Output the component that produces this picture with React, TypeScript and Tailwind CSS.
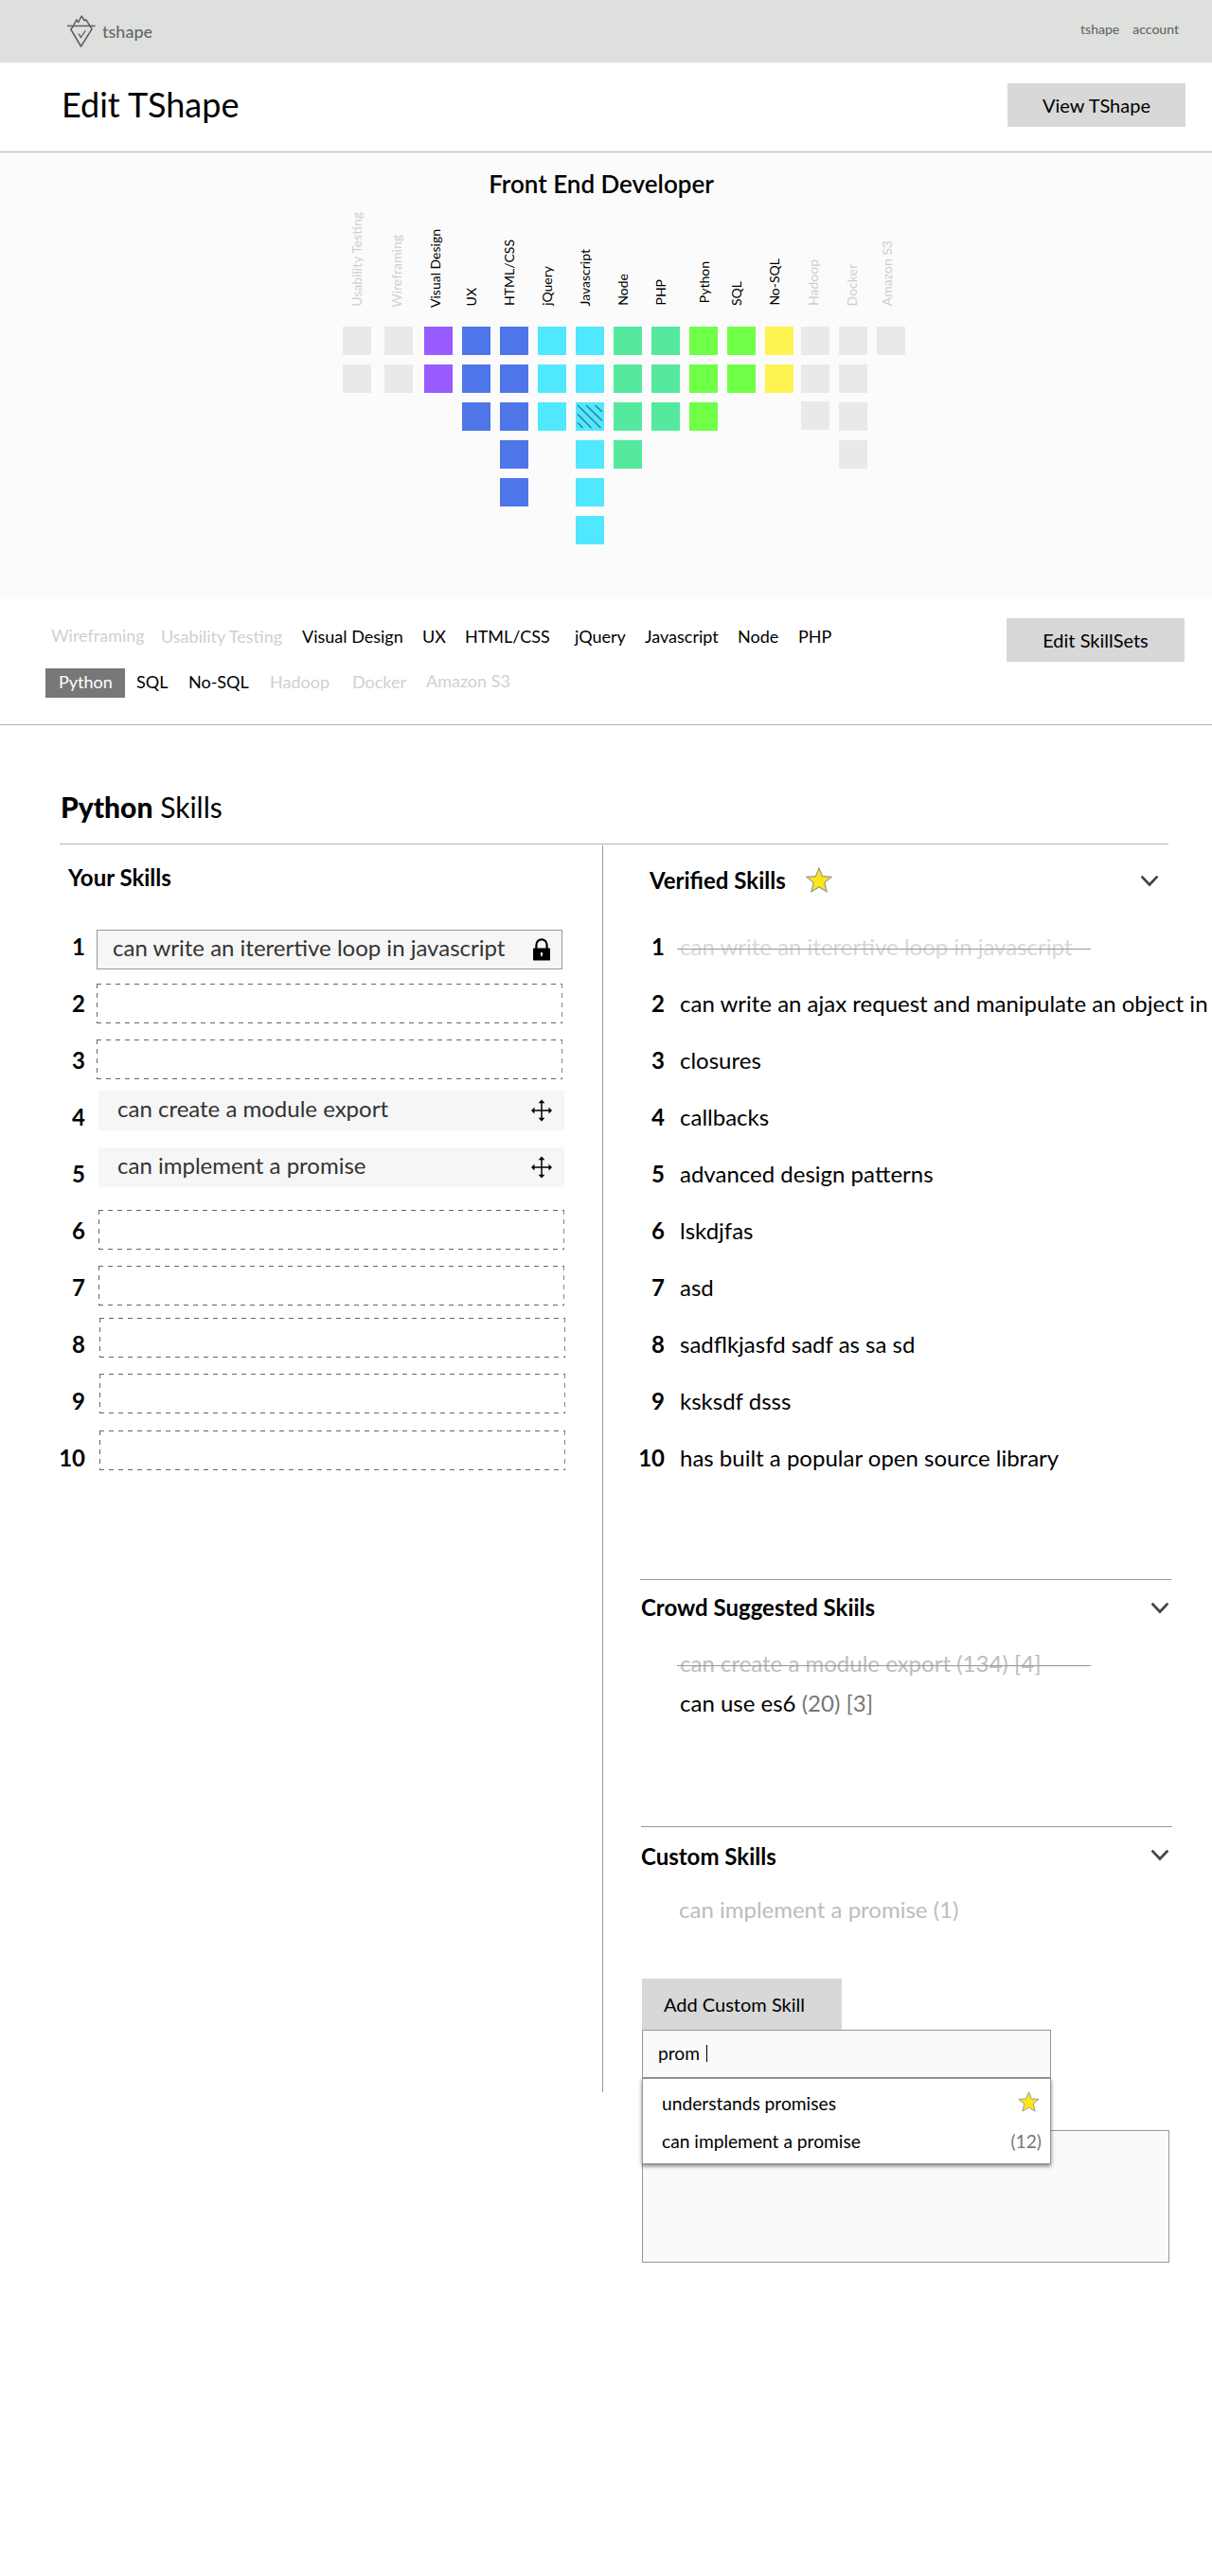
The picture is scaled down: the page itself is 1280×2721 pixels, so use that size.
import React from "react";

type Column = {
  name: string;
  count: number;
  fill: string;
  gap: string;
  label: string;
  muted?: boolean;
};

const columns: Column[] = [
  { name: "Usability Testing", count: 2, fill: "bg-[#e9e9e9]", gap: "", label: "ml-[6px] mb-[21px]", muted: true },
  { name: "Wireframing", count: 2, fill: "bg-[#e9e9e9]", gap: "ml-[14px]", label: "ml-[4px] mb-[20px]", muted: true },
  { name: "Visual Design", count: 2, fill: "bg-[#985cff]", gap: "ml-[12px]", label: "ml-[3px] mb-[20px]" },
  { name: "UX", count: 3, fill: "bg-[#4f76e8]", gap: "ml-[10px]", label: "ml-px mb-[22px]" },
  { name: "HTML/CSS", count: 5, fill: "bg-[#4f76e8]", gap: "ml-[10px]", label: "ml-px mb-[22px]" },
  { name: "jQuery", count: 3, fill: "bg-[#4fe8ff]", gap: "ml-[10px]", label: "ml-px mb-[22px]" },
  { name: "Javascript", count: 6, fill: "bg-[#4fe8ff]", gap: "ml-[10px]", label: "ml-px mb-[22px]" },
  { name: "Node", count: 4, fill: "bg-[#55e99d]", gap: "ml-[10px]", label: "ml-px mb-[22px]" },
  { name: "PHP", count: 3, fill: "bg-[#55e99d]", gap: "ml-[10px]", label: "ml-px mb-[22px]" },
  { name: "Python", count: 3, fill: "bg-[#70ff47]", gap: "ml-[10px]", label: "ml-[7px] mb-[25px]" },
  { name: "SQL", count: 2, fill: "bg-[#70ff47]", gap: "ml-[10px]", label: "ml-px mb-[22px]" },
  { name: "No-SQL", count: 2, fill: "bg-[#fff352]", gap: "ml-[10px]", label: "ml-px mb-[22px]" },
  { name: "Hadoop", count: 3, fill: "bg-[#e9e9e9]", gap: "ml-[8px]", label: "ml-[4px] mb-[22px]", muted: true },
  { name: "Docker", count: 4, fill: "bg-[#e9e9e9]", gap: "ml-[10px]", label: "ml-[5px] mb-[22px]", muted: true },
  { name: "Amazon S3", count: 1, fill: "bg-[#e9e9e9]", gap: "ml-[10px]", label: "ml-[2px] mb-[22px]", muted: true },
];

/* Joins the "ti" and "tt" pairs, leaving the decorative "st" and "ct" ones off. */
function Joined({ text }: { text: string }) {
  return (
    <>
      {text.split(/(ti|tt)/).map((part, i) =>
        i % 2 === 1 ? (
          <span key={i} className="[font-variant-ligatures:common-ligatures_discretionary-ligatures]">{part}</span>
        ) : (
          part
        ),
      )}
    </>
  );
}

function Logo() {
  return (
    <svg width="34" height="38" viewBox="69 14 34 38" fill="none" stroke="#5c5e5b" strokeWidth="1.5">
      <path d="M71 27.4H100.6" />
      <path d="M77.6 27L80.8 20.8L82.6 23.6L86.2 17L89.2 21.9L90.7 20.7L94.8 27" strokeLinejoin="round" />
      <path d="M77.5 27.6L74.8 31L85.5 49L97.1 30.6L95 27.6" strokeLinejoin="round" />
      <path d="M83.2 35.6L85.4 39.6L90.3 32.2" strokeWidth="1.2" />
    </svg>
  );
}

function Star({ className }: { className: string }) {
  return (
    <svg className={className} viewBox="0 0 28 27" fill="#f8e71c" stroke="#979797" strokeWidth="1.2">
      <path d="M14 1L17.6 9.7L27 10.4L19.8 16.4L22.1 25.8L14 21L5.9 25.8L8.2 16.4L1 10.4L10.4 9.7Z" />
    </svg>
  );
}

function Chevron() {
  return (
    <svg width="20" height="13" viewBox="0 0 20 13" fill="none" stroke="#444" strokeWidth="2.8">
      <path d="M1.6 1.6L10 10.4L18.4 1.6" />
    </svg>
  );
}

function Lock() {
  return (
    <svg width="18" height="24" viewBox="0 0 18 24">
      <path d="M3.4 11V7.2a5.6 5.8 0 0 1 11.2 0V11" fill="none" stroke="#000" strokeWidth="2.2" />
      <rect x="0" y="10.4" width="18" height="13.2" rx="1.2" />
      <path d="M9 15a1.3 1.3 0 0 1 .7 2.4v1.8H8.3v-1.8A1.3 1.3 0 0 1 9 15Z" fill="#fff" />
    </svg>
  );
}

function Move() {
  return (
    <svg width="22" height="24" viewBox="0 0 22 24">
      <path d="M11 3V21M2.6 12H19.4" stroke="#000" strokeWidth="1.5" />
      <path d="M11 .6L14.4 4.2H7.6ZM11 23.4L14.4 19.8H7.6ZM0 12L3.5 8.6V15.4ZM22 12L18.5 8.6V15.4Z" />
    </svg>
  );
}

function Square({ fill, hatched, raised }: { fill: string; hatched?: boolean; raised?: boolean }) {
  return (
    <div className={`size-[30px] ${fill} ${raised ? "-mt-px" : ""}`}>
      {hatched && (
        <svg width="30" height="30" viewBox="0 0 30 30" stroke="#35707c" strokeWidth="1.1">
          <path d="M2 3L26.5 27M11 3L28 19.5M20.5 3L28 10M2 12.5L16.5 27M2 21.5L7.5 27" />
        </svg>
      )}
    </div>
  );
}

type Tag = { name: string; at: string; muted?: boolean };

const tagsTop: Tag[] = [
  { name: "Wireframing", at: "w-[116px] -mt-px", muted: true },
  { name: "Usability Testing", at: "w-[149px]", muted: true },
  { name: "Visual Design", at: "w-[127px]" },
  { name: "UX", at: "w-[45px]" },
  { name: "HTML/CSS", at: "w-[116px]" },
  { name: "jQuery", at: "w-[74px]" },
  { name: "Javascript", at: "w-[98px]" },
  { name: "Node", at: "w-[64px]" },
  { name: "PHP", at: "w-[40px]" },
];

const tagsBottom: Tag[] = [
  { name: "SQL", at: "w-[55px]" },
  { name: "No-SQL", at: "w-[86px]" },
  { name: "Hadoop", at: "w-[87px]", muted: true },
  { name: "Docker", at: "w-[78px]", muted: true },
  { name: "Amazon S3", at: "w-[100px] -mt-px", muted: true },
];

function TagItem({ tag }: { tag: Tag }) {
  return (
    <a className={`shrink-0 whitespace-nowrap ${tag.at} ${tag.muted ? "text-[#d0d0d0]" : "text-black"}`}>
      <Joined text={tag.name} />
    </a>
  );
}

type Slot = { at: string; text?: string; locked?: boolean };

const slots: Slot[] = [
  { at: "mt-[11px] ml-[12px]", text: "can write an iterertive loop in javascript", locked: true },
  { at: "mt-[8px] ml-[12px]" },
  { at: "mt-[7px] ml-[12px]" },
  { at: "mt-px ml-[14px]", text: "can create a module export" },
  { at: "mt-px ml-[14px]", text: "can implement a promise" },
  { at: "mt-[7px] ml-[14px]" },
  { at: "mt-[6px] ml-[14px]" },
  { at: "mt-px ml-[15px]" },
  { at: "ml-[15px]" },
  { at: "ml-[15px]" },
];

function SlotBox({ slot }: { slot: Slot }) {
  if (!slot.text) {
    return (
      <div
        className={`h-[42px] w-[492px] [background:repeating-linear-gradient(90deg,#666_0_5px,transparent_5px_10px)_top/100%_1px_no-repeat,repeating-linear-gradient(90deg,#666_0_5px,transparent_5px_10px)_bottom/100%_1px_no-repeat,repeating-linear-gradient(180deg,#666_0_5px,transparent_5px_10px)_left/1px_100%_no-repeat,repeating-linear-gradient(180deg,#888_0_5px,transparent_5px_10px)_right/1px_100%_no-repeat] ${slot.at}`}
      />
    );
  }
  if (slot.locked) {
    return (
      <div className={`flex h-[42px] w-[492px] justify-between border border-[#979797] bg-[#f6f6f6] pt-[4px] pr-[12px] pl-[16px] text-[#333] ${slot.at}`}>
        <span><Joined text={slot.text} /></span>
        <span className="pt-[4px]"><Lock /></span>
      </div>
    );
  }
  return (
    <div className={`flex h-[42px] w-[492px] justify-between bg-[#f6f6f6] pt-[5px] pr-[13px] pl-[20px] text-[#333] ${slot.at}`}>
      <span>{slot.text}</span>
      <span className="pt-[4px]"><Move /></span>
    </div>
  );
}

const verified = [
  "can write an iterertive loop in javascript",
  "can write an ajax request and manipulate an object in",
  "closures",
  "callbacks",
  "advanced design patterns",
  "lskdjfas",
  "asd",
  "sadflkjasfd sadf as sa sd",
  "ksksdf dsss",
  "has built a popular open source library",
];

function Struck({ text, className }: { text: string; className: string }) {
  return (
    <span className={`relative ${className}`}>
      <Joined text={text} />
      <span className="absolute top-[16px] -left-[3px] h-px w-[437px] bg-[#979797]" />
    </span>
  );
}

export default function App() {
  return (
    <div className="h-[2721px] w-[1280px] overflow-hidden bg-white font-['Lato',sans-serif] text-black">
      <header className="flex h-[66px] items-start justify-between bg-[#dee0dd] pr-[35px] pl-[69px] text-[#666866]">
        <div className="flex items-start font-medium">
          <span className="mt-[14px]"><Logo /></span>
          <span className="mt-[22px] ml-[5px] text-[18px] leading-[22px]">tshape</span>
        </div>
        <nav className="mt-[22px] flex gap-[14px] text-[14px] leading-[17px] font-medium">
          <a>tshape</a>
          <a>account</a>
        </nav>
      </header>

      <div className="flex h-[95px] items-start justify-between border-b border-[#b2b2b2] pr-[28px] pl-[65px]">
        <h1 className="mt-[22px] text-[36px] leading-[44px]">Edit TShape</h1>
        <button className="mt-[22px] flex h-[46px] w-[188px] items-center justify-center bg-[#d8d8d8] pb-px text-[20px] leading-[24px]">
          View TShape
        </button>
      </div>

      <section className="h-[471px] bg-[#fbfbfb] pt-[17px]">
        <h2 className="pr-[10px] text-center text-[26px] leading-[32px] font-semibold">Front End Developer</h2>
        <div className="flex items-start pl-[362px]">
          {columns.map((c) => (
            <div key={c.name} className={`w-[30px] shrink-0 ${c.gap}`}>
              <div className="flex h-[135px] items-end text-[14px] leading-[17px]">
                <span
                  className={`rotate-180 whitespace-nowrap [writing-mode:vertical-rl] ${c.label} ${c.muted ? "text-[#cfcfcf]" : "text-black"}`}
                >
                  <Joined text={c.name} />
                </span>
              </div>
              <div className="flex flex-col gap-[10px]">
                {Array.from({ length: c.count }, (_, i) => (
                  <Square
                    key={i}
                    fill={c.fill}
                    hatched={c.name === "Javascript" && i === 2}
                    raised={c.name === "Hadoop" && i === 2}
                  />
                ))}
              </div>
            </div>
          ))}
        </div>
      </section>

      <section className="flex h-[134px] items-start justify-between border-b border-[#b2b2b2] pr-[29px] text-[18px] leading-[22px]">
        <div>
          <div className="mt-[29px] flex items-start pl-[54px]">
            {tagsTop.map((t) => (
              <TagItem key={t.name} tag={t} />
            ))}
          </div>
          <div className="mt-[23px] flex items-start pl-[48px]">
            <a className="h-[31px] w-[84px] bg-[#777] pt-[3px] pl-[14px] text-white">Python</a>
            <div className="mt-[3px] ml-[12px] flex">
              {tagsBottom.map((t) => (
                <TagItem key={t.name} tag={t} />
              ))}
            </div>
          </div>
        </div>
        <button className="mt-[21px] flex h-[46px] w-[188px] items-center justify-center bg-[#d8d8d8] pb-px text-[20px] leading-[24px]">
          Edit SkillSets
        </button>
      </section>

      <h2 className="mt-[68px] pl-[64px] text-[30px] leading-[36px]">
        <b className="font-black">Python</b> Skills
      </h2>
      <div className="mt-[21px] ml-[63px] h-px w-[1171px] bg-[#b2b2b2]" />

      <main className="flex items-start text-[24px] leading-[28px]">
        <section className="w-[636px] shrink-0 pt-[21px]">
          <h3 className="pl-[72px] font-bold">Your Skills</h3>
          <ol className="mt-[30px]">
            {slots.map((s, i) => (
              <li key={i} className="flex h-[60px] items-start">
                <span className="mt-[15px] w-[90px] text-right font-bold">{i + 1}</span>
                <SlotBox slot={s} />
              </li>
            ))}
          </ol>
        </section>

        <div className="mt-px h-[1317px] w-px shrink-0 bg-[#979797]" />

        <section className="w-[643px] shrink-0 pt-[24px]">
          <div className="flex items-start pl-[49px]">
            <h3 className="font-bold">Verified Skills</h3>
            <Star className="ml-[21px] h-[27px] w-[28px]" />
            <span className="mt-[8px] ml-auto pr-[56px]"><Chevron /></span>
          </div>
          <ol className="mt-[42px]">
            {verified.map((v, i) => (
              <li key={v} className="flex h-[60px] items-start whitespace-nowrap">
                <span className="w-[65px] text-right font-bold">{i + 1}</span>
                {i === 0 ? (
                  <Struck className="ml-[16px] text-[#d8d8d8]" text={v} />
                ) : (
                  <span className="ml-[16px]"><Joined text={v} /></span>
                )}
              </li>
            ))}
          </ol>

          <div className="mt-[82px] ml-[39px] w-[561px] border-t border-[#979797] pt-[15px]">
            <div className="flex items-start justify-between pr-[2px] pl-px">
              <h3 className="font-bold">Crowd Suggested Skiils</h3>
              <span className="mt-[8px]"><Chevron /></span>
            </div>
            <div className="mt-[31px] pl-[42px]">
              <Struck className="block text-[#bdbdbd]" text="can create a module export (134) [4]" />
              <div className="mt-[14px]">
                can use es6 <span className="text-[#777]">(20) [3]</span>
              </div>
            </div>
          </div>

          <div className="mt-[116px] ml-[40px] w-[561px] border-t border-[#979797] pt-[17px]">
            <div className="flex items-start justify-between pr-[3px]">
              <h3 className="font-bold">Custom Skills</h3>
              <span className="mt-[6px]"><Chevron /></span>
            </div>
            <div className="mt-[28px] pl-[40px] text-[#bdbdbd]">can implement a promise (1)</div>
          </div>

          <div className="mt-[59px] ml-[41px] text-[19.2px] leading-[24px]">
            <button className="flex h-[54px] w-[211px] items-center bg-[#d8d8d8] pb-px pl-[23px] text-[20px]">Add Custom Skill</button>
            <div className="relative z-10 h-[51px] w-[432px] border border-[#979797] bg-[#fafafa]">
              <div className="flex items-start pt-[12px] pl-[16px]">
                <span>prom</span>
                <span className="mt-[3px] ml-[7px] h-[18px] w-px bg-black" />
              </div>
              <div className="absolute top-[50px] -left-px h-[91px] w-[432px] border border-[#979797] bg-white shadow-[0_2px_4px_rgba(0,0,0,0.5)]">
                <div className="flex items-start justify-between pt-[14px] pr-[11px] pl-[20px]">
                  <span>understands promises</span>
                  <Star className="-mt-px h-[22px] w-[23px]" />
                </div>
                <div className="flex items-start justify-between pt-[16px] pr-[9px] pl-[20px]">
                  <span>can implement a promise</span>
                  <span className="text-[#777]">(12)</span>
                </div>
              </div>
            </div>
            <div className="mt-[55px] h-[140px] w-[557px] border border-[#979797] bg-[#fafafa]" />
          </div>
        </section>
      </main>
    </div>
  );
}
